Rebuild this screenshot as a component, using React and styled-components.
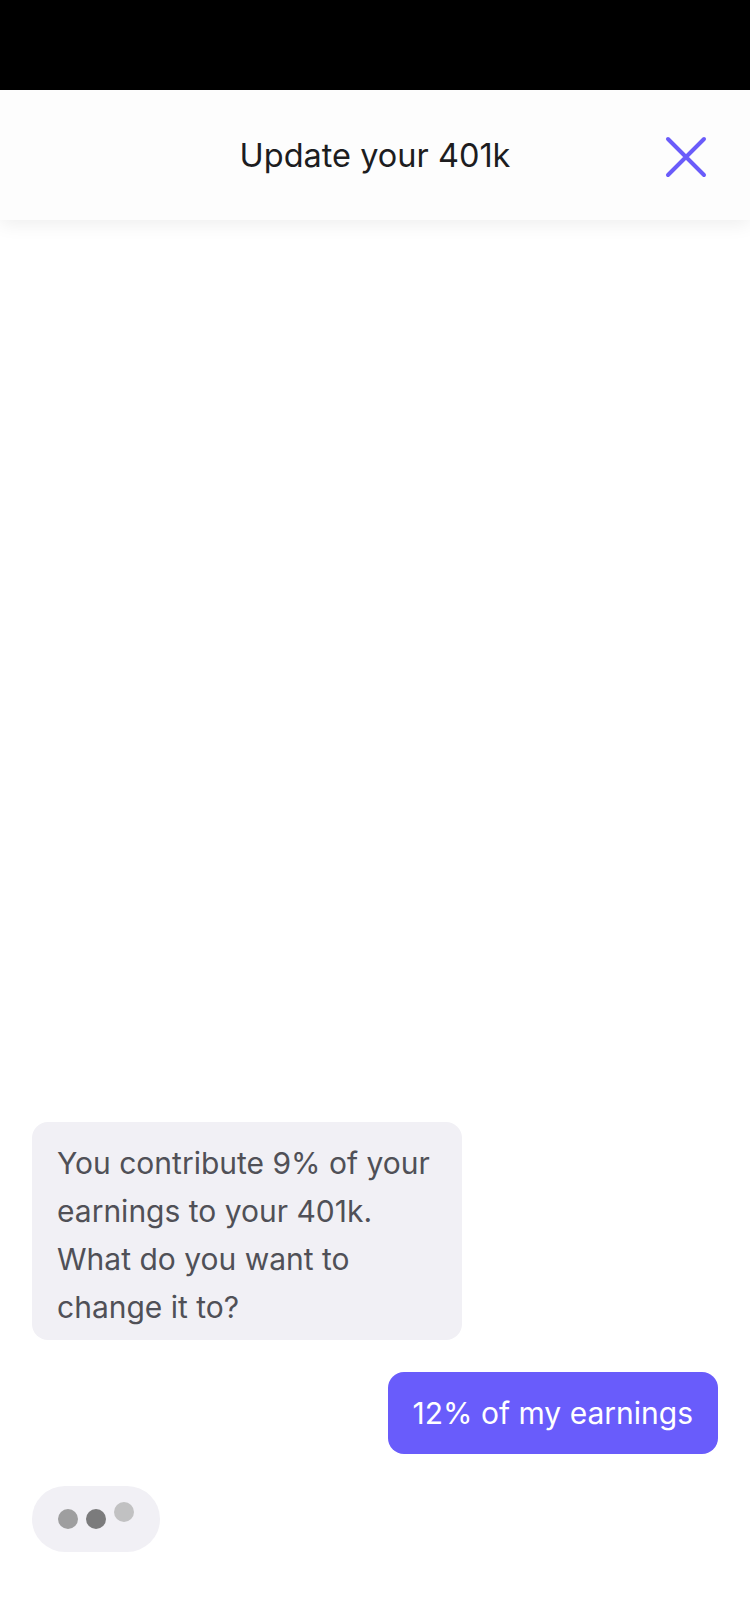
import React from 'react';
import styled, { createGlobalStyle } from 'styled-components';

const GlobalStyle = createGlobalStyle`
    html, body {
        margin: 0;
        padding: 0;
        background: #ffffff;
    }
    body {
        font-family: Inter, "Noto Sans", "Liberation Sans", sans-serif;
        -webkit-font-smoothing: antialiased;
    }
`;

function CloseIcon() {
    return (
        <svg width="44" height="44" viewBox="0 0 44 44" fill="none">
            <path d="M4 4 L40 40 M40 4 L4 40" stroke="#6a5cfa" strokeWidth="4" strokeLinecap="round" />
        </svg>
    )
}

function App() {
    return (
        <Screen>
            <GlobalStyle />
            <StatusBar />
            <Header>
                <Title>Update your 401k</Title>
                <CloseButton aria-label="Close">
                    <CloseIcon />
                </CloseButton>
            </Header>
            <Conversation>
                <Bubble from="bot">
                    You contribute 9% of your earnings to your 401k. What do you want to change it to?
                </Bubble>
                <Bubble from="user">12% of my earnings</Bubble>
                <Typing>
                    <Dot shade="#9e9e9f" />
                    <Dot shade="#7b7b7c" />
                    <Dot shade="#c1c1c2" raised />
                </Typing>
            </Conversation>
        </Screen>
    )
}

const Screen = styled.div`
    display: flex;
    flex-direction: column;
    height: 1624px;
    background: #ffffff;
`;

const StatusBar = styled.div`
    height: 90px;
    background: #000000;
    flex-shrink: 0;
`;

const Header = styled.header`
    position: relative;
    z-index: 1;
    display: flex;
    align-items: center;
    justify-content: center;
    height: 130px;
    flex-shrink: 0;
    background: #fdfdfd;
    box-shadow: 0 4px 18px rgba(0, 0, 0, 0.07);
`;

const Title = styled.h1`
    margin: 0;
    font-size: 32.5px;
    font-weight: 400;
    color: #1d1d1f;
    letter-spacing: 0;
`;

const CloseButton = styled.button`
    position: absolute;
    right: 42px;
    top: 45px;
    display: flex;
    padding: 0;
    border: none;
    background: transparent;
`;

const Conversation = styled.main`
    flex: 1;
    display: flex;
    flex-direction: column;
    justify-content: flex-end;
    gap: 32px;
    padding: 0 32px 72px;
`;

const Bubble = styled.div`
    box-sizing: border-box;
    align-self: ${p => p.from === 'user' ? 'flex-end' : 'flex-start'};
    width: ${p => p.from === 'user' ? 'auto' : '430px'};
    padding: ${p => p.from === 'user' ? '0 25px' : '17px 25px 9px'};
    height: ${p => p.from === 'user' ? '82px' : 'auto'};
    display: flex;
    align-items: center;
    border-radius: 16px;
    font-size: 30px;
    line-height: 48px;
    background: ${p => p.from === 'user' ? '#695cfb' : '#f1f0f5'};
    color: ${p => p.from === 'user' ? '#ffffff' : '#505057'};
`;

const Typing = styled.div`
    align-self: flex-start;
    display: flex;
    align-items: center;
    gap: 8px;
    height: 66px;
    padding: 0 26px;
    box-sizing: border-box;
    width: 128px;
    border-radius: 33px;
    background: #f1f0f5;
`;

const Dot = styled.span`
    width: 20px;
    height: 20px;
    border-radius: 50%;
    background: ${p => p.shade};
    transform: translateY(${p => p.raised ? '-7px' : '0'});
`;

export default App
